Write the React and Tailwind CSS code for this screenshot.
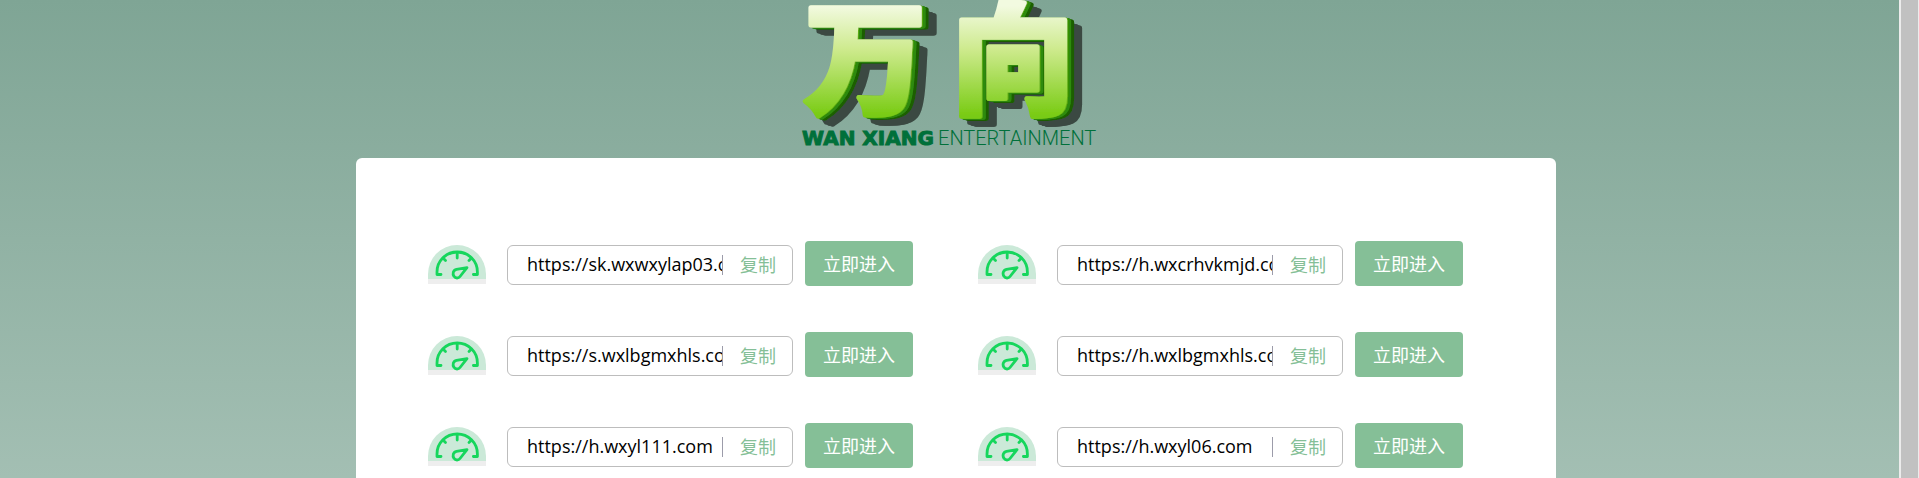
import React, { useState } from 'react';

const LINES = [
    'https://sk.wxwxylap03.com',
    'https://h.wxcrhvkmjd.com',
    'https://s.wxlbgmxhls.com',
    'https://h.wxlbgmxhls.com',
    'https://h.wxyl111.com',
    'https://h.wxyl06.com',
];

function Logo() {
    return (
        <svg width="320" height="158" viewBox="0 0 320 158" role="img" aria-label="万向 WAN XIANG ENTERTAINMENT">
            <defs>
                <linearGradient id="face" gradientUnits="userSpaceOnUse" x1="0" y1="6" x2="0" y2="116">
                    <stop offset="0" stopColor="#f2fae0" />
                    <stop offset="0.4" stopColor="#cdea8c" />
                    <stop offset="1" stopColor="#78cb12" />
                </linearGradient>
                {/* green side walls plus the dark cast shadow */}
                <filter id="depth" filterUnits="userSpaceOnUse" x="-10" y="-10" width="340" height="170">
                    <feDropShadow dx="1" dy="0" stdDeviation="0" floodColor="#5fae14" />
                    <feDropShadow dx="3" dy="1" stdDeviation="0" floodColor="#2f8a08" />
                    <feDropShadow dx="3" dy="1" stdDeviation="0" floodColor="#1a5f06" />
                    <feDropShadow dx="8" dy="6" stdDeviation="0.6" floodColor="#3b4a43" />
                </filter>
            </defs>
            <g
                className="font-['Noto_Sans_CJK_SC',sans-serif] font-black"
                fontSize="122"
                fill="url(#face)"
                stroke="url(#face)"
                strokeWidth="5"
                strokeLinejoin="round"
                filter="url(#depth)"
            >
                <text x="8" y="104">万</text>
                <text x="156" y="104">向</text>
            </g>
            <text x="6" y="145" className="font-['DejaVu_Sans',sans-serif] font-bold" fontSize="20" fill="#00703a" stroke="#00703a" strokeWidth="1">WAN XIANG</text>
            <text x="142" y="145" className="font-[Roboto,sans-serif] font-light" fontSize="20" fill="#00703a">ENTERTAINMENT</text>
        </svg>
    );
}

function Gauge() {
    return (
        <svg width="58" height="39" viewBox="0 0 58 39" className="shrink-0" aria-hidden="true">
            <path d="M0 34V29a29 29 0 0 1 58 0v5z" fill="#cbe9d8" />
            <path d="M0 34h58v5H0z" fill="#eeeeee" />
            <g fill="none" stroke="#16d65c" strokeWidth="2.8" strokeLinecap="round" strokeLinejoin="round">
                <path d="M13 29.500H9V27a20.200 20 0 0 1 40.400 0v2.500h-4" />
                <path d="M29.200 8v5M15.500 13.500l2 2M43 13.500l-2 2" />
                <path d="M39 22.700L28.500 24.300C25 25 24.300 29 26 31.300C27.500 33.600 30.500 33.500 32 31.500z" />
            </g>
        </svg>
    );
}

function LineItem({ url, index }) {
    const [copied, setCopied] = useState(false);

    const handleCopy = async () => {
        try {
            await navigator.clipboard.writeText(url);
            setCopied(true);
        } catch (e) {
            console.error(e);
        }
    };

    return (
        <li className="flex items-start">
            <div className="flex items-start pt-1">
                <Gauge />
                <div className="ml-[21px] flex h-10 w-[286px] items-center rounded-md border border-[#bdbdbd] bg-white pl-[19px] pr-4">
                    <input
                        id={`line-${index}`}
                        aria-label={`线路${index + 1}`}
                        readOnly
                        value={url}
                        className="h-8 min-w-0 flex-1 bg-transparent pb-0.5 text-black outline-none"
                    />
                    <button onClick={handleCopy} className="flex h-5 items-center border-l border-[#9c9caa] pl-[17px] text-[#85bf97]">
                        {copied ? '已复' : '复制'}
                    </button>
                </div>
            </div>
            <button onClick={() => window.open(url)} className="ml-3 h-[45px] w-[108px] rounded bg-[#85bf97] text-white">
                立即进入
            </button>
        </li>
    );
}

export default function App() {
    return (
        <div className="relative flex min-h-screen flex-col items-center bg-linear-to-b from-[#7fa595] to-[#a3bfb3] pr-[7px] font-['Open_Sans','Noto_Sans_CJK_SC',sans-serif] text-[18px] leading-6">
            <header className="h-[158px]">
                <Logo />
            </header>
            <main className="w-full max-w-[1200px] flex-1 rounded-t-md bg-white px-[72px] pt-[83px]">
                <ul className="grid grid-cols-[repeat(auto-fill,485px)] gap-x-[65px] gap-y-[46px]">
                    {LINES.map((url, i) => (
                        <LineItem key={url} url={url} index={i} />
                    ))}
                </ul>
            </main>
            {/* scrollbar strip */}
            <div className="absolute inset-y-0 right-0 w-5 border-r border-l-2 border-[#ececec] bg-[#c1c1c1]" />
        </div>
    );
}
